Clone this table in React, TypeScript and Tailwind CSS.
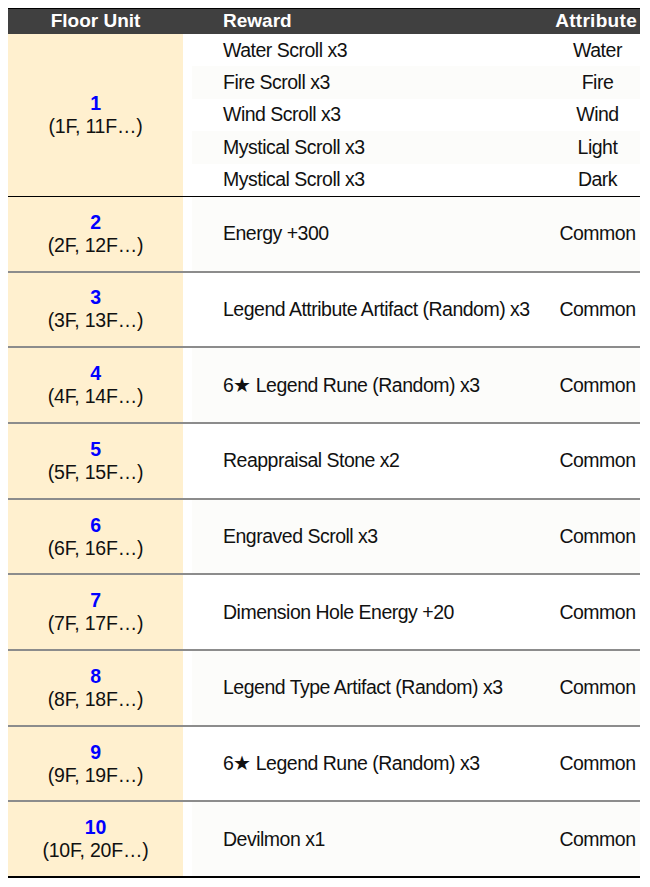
const firstFloor = [
  { reward: 'Water Scroll x3', attr: 'Water' },
  { reward: 'Fire Scroll x3', attr: 'Fire' },
  { reward: 'Wind Scroll x3', attr: 'Wind' },
  { reward: 'Mystical Scroll x3', attr: 'Light' },
  { reward: 'Mystical Scroll x3', attr: 'Dark' },
];

const floors = [
  { n: 2, sub: '(2F, 12F…)', reward: 'Energy +300' },
  { n: 3, sub: '(3F, 13F…)', reward: 'Legend Attribute Artifact (Random) x3' },
  { n: 4, sub: '(4F, 14F…)', reward: '6★ Legend Rune (Random) x3' },
  { n: 5, sub: '(5F, 15F…)', reward: 'Reappraisal Stone x2' },
  { n: 6, sub: '(6F, 16F…)', reward: 'Engraved Scroll x3' },
  { n: 7, sub: '(7F, 17F…)', reward: 'Dimension Hole Energy +20' },
  { n: 8, sub: '(8F, 18F…)', reward: 'Legend Type Artifact (Random) x3' },
  { n: 9, sub: '(9F, 19F…)', reward: '6★ Legend Rune (Random) x3' },
  { n: 10, sub: '(10F, 20F…)', reward: 'Devilmon x1' },
];

function FloorCell({ n, sub }: { n: number; sub: string }) {
  return (
    <div className="w-[175px] shrink-0 bg-[#fff0cf] flex flex-col items-center justify-center leading-[23px] text-[19.5px] tracking-[-0.2px]">
      <span className="font-bold text-[#0000ff]">{n}</span>
      <span>{sub}</span>
    </div>
  );
}

export default function App() {
  return (
    <div className="bg-white min-h-[887px] pt-2 pl-2 text-[19.5px] tracking-[-0.5px] text-[#111] font-['Liberation_Sans',Arial,sans-serif]">
      <div className="w-[632px]">
        <div className="h-[26px] flex items-center bg-[#404040] border-t border-black text-white font-bold text-[19px] tracking-normal">
          <div className="w-[175px] text-center">Floor Unit</div>
          <div className="flex-1 pl-[40px]">Reward</div>
          <div className="w-[85px] text-right pr-[3px] tracking-[0.3px]">Attribute</div>
        </div>

        <div className="flex border-b border-black">
          <FloorCell n={1} sub="(1F, 11F…)" />
          <div className="flex-1 flex flex-col">
            {firstFloor.map((r, i) => (
              <div key={i} className="h-[32.4px] pl-[9px] flex">
                <div className={`flex-1 flex items-center ${i % 2 === 1 ? 'bg-[#fcfcfa]' : 'bg-white'}`}>
                  <div className="flex-1 pl-[31px]">{r.reward}</div>
                  <div className="w-[85px] text-center">{r.attr}</div>
                </div>
              </div>
            ))}
          </div>
        </div>

        {floors.map((f, i) => (
          <div
            key={f.n}
            className={`flex h-[75.7px] border-b-2 ${i === floors.length - 1 ? 'border-black' : 'border-[#8c8c8c]'}`}
          >
            <FloorCell n={f.n} sub={f.sub} />
            <div className="flex-1 pl-[9px] flex">
              <div className={`flex-1 flex items-center ${i % 2 === 0 ? 'bg-[#fcfcfa]' : 'bg-white'}`}>
                <div className="flex-1 pl-[31px]">{f.reward}</div>
                <div className="w-[85px] text-center">Common</div>
              </div>
            </div>
          </div>
        ))}
      </div>
    </div>
  );
}
